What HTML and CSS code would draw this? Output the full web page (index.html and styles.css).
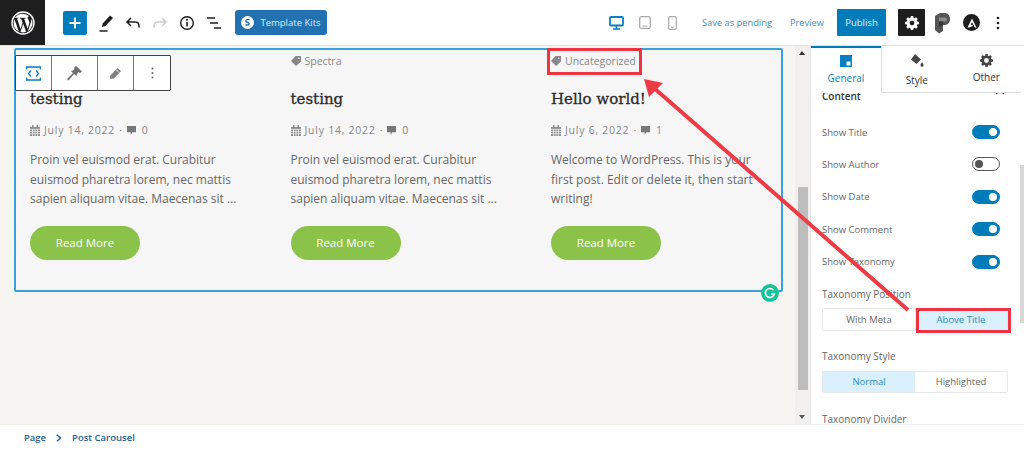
FILE: index.html
```html
<!DOCTYPE html>
<html lang="en">
<head>
<meta charset="utf-8">
<title>Post Carousel</title>
<link rel="stylesheet" href="styles.css">
</head>
<body>
<div class="app">
  <header class="topbar">
    <div class="wp-logo">
      <svg width="24" height="24" viewBox="0 0 24 24"><circle cx="12" cy="12" r="11" fill="none" stroke="#fff" stroke-width="1.4"/><path fill="#fff" d="M2.6 12a9.4 9.4 0 0 0 5.3 8.5L3.4 8.2A9.4 9.4 0 0 0 2.6 12zm15.7-.5c0-1.200-.4-2-.8-2.600-.5-.8-.9-1.400-.9-2.100 0-.8.600-1.600 1.500-1.600h.1A9.400 9.400 0 0 0 4 6.900h.6c1 0 2.500-.1 2.500-.1.500 0 .6.700.1.800 0 0-.5.100-1.100.1l3.400 10.200 2.100-6.200-1.500-4c-.5 0-1-.1-1-.1-.5 0-.4-.8.100-.8 0 0 1.600.1 2.500.1 1 0 2.500-.1 2.500-.1.500 0 .6.700.1.800 0 0-.5.100-1.100.1l3.400 10.100.9-3.100c.4-1.200.7-2.100.7-2.800zM12.200 12.800l-2.800 8.200a9.400 9.400 0 0 0 5.800-.2l-.1-.1zm8.100-5.300l.1 1c0 .9-.2 2-.7 3.400l-2.900 8.300a9.400 9.400 0 0 0 3.500-12.700z"/></svg>
    </div>
    <div class="tools">
      <button class="add-btn">
        <svg width="14" height="14" viewBox="0 0 14 14"><path d="M7 1.500v11M1.500 7h11" stroke="#fff" stroke-width="1.800"/></svg>
      </button>
      <span class="tool">
        <svg width="18" height="20" viewBox="0 0 18 20"><path fill="#1e1e1e" d="M13 2.500l3 2.500-7.500 8-3.500 1 .7-3.500z"/><path d="M2.500 18h8" stroke="#1e1e1e" stroke-width="1.500"/></svg>
      </span>
      <span class="tool">
        <svg width="18" height="18" viewBox="0 0 18 18"><path fill="none" stroke="#1e1e1e" stroke-width="1.500" d="M7 4L3 8l4 4M3 8h8c2.500 0 4 1.500 4 4v1.500"/></svg>
      </span>
      <span class="tool">
        <svg width="18" height="18" viewBox="0 0 18 18"><path fill="none" stroke="#ccc" stroke-width="1.500" d="M11 4l4 4-4 4M15 8H7c-2.500 0-4 1.500-4 4v1.500"/></svg>
      </span>
      <span class="tool">
        <svg width="16" height="16" viewBox="0 0 16 16"><circle cx="8" cy="8" r="6.300" fill="none" stroke="#1e1e1e" stroke-width="1.400"/><path d="M8 7v4.500" stroke="#1e1e1e" stroke-width="1.600"/><circle cx="8" cy="4.800" r="1" fill="#1e1e1e"/></svg>
      </span>
      <span class="tool">
        <svg width="16" height="14" viewBox="0 0 16 14"><path d="M1 2h8M4 7h8M8 12h7" stroke="#1e1e1e" stroke-width="1.500"/></svg>
      </span>
      <button class="kits-btn">
        <svg width="13" height="13" viewBox="0 0 13 13"><circle cx="6.500" cy="6.500" r="6.500" fill="#fff"/><path d="M8.500 3.600H6C4.500 3.600 4.400 5.800 6 6.200l1 .3c1.400.4 1.200 2.500-.3 2.500H4.400" fill="none" stroke="#2271b1" stroke-width="1.400"/></svg>
        Template Kits
      </button>
    </div>
    <div class="actions">
      <div class="devices">
        <svg width="15" height="14" viewBox="0 0 15 14"><rect x="1" y="1" width="13" height="8.500" rx="1" fill="none" stroke="#0a7fbd" stroke-width="1.800"/><path d="M7.500 10v2.500M4 13h7" stroke="#0a7fbd" stroke-width="1.500"/></svg>
        <svg width="12" height="13" viewBox="0 0 12 13"><rect x=".7" y=".7" width="10.600" height="11.600" rx="1.500" fill="none" stroke="#aaa" stroke-width="1.300"/><path d="M3.500 10h5" stroke="#aaa"/></svg>
        <svg class="device-phone" width="9" height="14" viewBox="0 0 9 14"><rect x=".7" y=".7" width="7.600" height="12.600" rx="1.300" fill="none" stroke="#aaa" stroke-width="1.200"/><path d="M3 11.300h3" stroke="#aaa"/></svg>
      </div>
      <a class="link save">Save as pending</a>
      <a class="link preview">Preview</a>
      <button class="publish">Publish</button>
      <button class="gear-btn">
        <svg width="14" height="14" viewBox="0 0 24 24"><path fill="#fff" fill-rule="evenodd" d="M14 1l.6 3.200 1.700.7L19 3.100 21.900 6l-1.800 2.700.7 1.700L24 11v4l-3.200.6-.7 1.700 1.800 2.700L19 22.900l-2.700-1.800-1.700.7L14 25h-4l-.6-3.200-1.700-.7L5 22.900 2.100 20l1.800-2.700-.7-1.700L0 15v-4l3.200-.6.700-1.700L2.100 6 5 3.100l2.700 1.800 1.700-.7L10 1zM12 9a4 4 0 1 0 0 8 4 4 0 0 0 0-8z" transform="translate(0 -1)"/></svg>
      </button>
      <svg class="p-logo" width="15" height="22" viewBox="0 0 15 22"><path fill="#555" d="M0 4l5-3h5c3 0 5 2.800 5 6s-2 6-5 6H8v6l-4 2.500L0 18z"/><path fill="#8a8a8a" d="M4 5.500h5.500C11 5.500 12 6.200 12 7.400S11 9.500 9.500 9.500H4z"/><path fill="#333" d="M4 9.500h4V13l-4 2z"/></svg>
      <span class="astra">
        <svg width="10" height="10" viewBox="0 0 10 10"><path fill="#fff" d="M5 .5L9.500 9.500H7.800L5 4 3.600 7l1.700-.3L6 8 2 9.500H.5z"/></svg>
      </span>
      <svg class="dots" width="4" height="14" viewBox="0 0 4 14"><circle cx="2" cy="2" r="1.300" fill="#1e1e1e"/><circle cx="2" cy="7" r="1.300" fill="#1e1e1e"/><circle cx="2" cy="12" r="1.300" fill="#1e1e1e"/></svg>
    </div>
  </header>

  <div class="workspace">
    <main class="canvas">
      <section class="block">
        <article class="post">
          <div class="tag tag-hidden">&nbsp;</div>
          <h2>testing</h2>
          <div class="meta"><svg class="ico" width="10" height="11" viewBox="0 0 10 11"><path fill="#8f8f8f" d="M0 2h10v9H0zM2 0h1.500v2H2zM6.500 0H8v2H6.500z"/><path stroke="#f6f6f6" stroke-width=".7" d="M0 4.300h10M0 6.500h10M0 8.700h10M2.500 4v7M5 4v7M7.500 4v7"/></svg><span>July 14, 2022</span><span class="sep">·</span><svg class="ico" width="9" height="9" viewBox="0 0 10 10"><path fill="#777" d="M0 0h10v7H6L4 10V7H0z"/></svg><span class="num">0</span></div>
          <p>Proin vel euismod erat. Curabitur euismod pharetra lorem, nec mattis sapien aliquam vitae. Maecenas sit ...</p>
          <a class="read">Read More</a>
        </article>
        <article class="post">
          <div class="tag"><svg class="ico" width="10" height="10" viewBox="0 0 10 10"><path fill="#888" d="M4.500 0H10v5.500L5 10 0 5z"/><circle cx="7.800" cy="2.200" r=".8" fill="#f6f6f6"/></svg>Spectra</div>
          <h2>testing</h2>
          <div class="meta"><svg class="ico" width="10" height="11" viewBox="0 0 10 11"><path fill="#8f8f8f" d="M0 2h10v9H0zM2 0h1.500v2H2zM6.500 0H8v2H6.500z"/><path stroke="#f6f6f6" stroke-width=".7" d="M0 4.300h10M0 6.500h10M0 8.700h10M2.500 4v7M5 4v7M7.500 4v7"/></svg><span>July 14, 2022</span><span class="sep">·</span><svg class="ico" width="9" height="9" viewBox="0 0 10 10"><path fill="#777" d="M0 0h10v7H6L4 10V7H0z"/></svg><span class="num">0</span></div>
          <p>Proin vel euismod erat. Curabitur euismod pharetra lorem, nec mattis sapien aliquam vitae. Maecenas sit ...</p>
          <a class="read">Read More</a>
        </article>
        <article class="post">
          <div class="tag"><svg class="ico" width="10" height="10" viewBox="0 0 10 10"><path fill="#888" d="M4.500 0H10v5.500L5 10 0 5z"/><circle cx="7.800" cy="2.200" r=".8" fill="#f6f6f6"/></svg>Uncategorized</div>
          <h2>Hello world!</h2>
          <div class="meta"><svg class="ico" width="10" height="11" viewBox="0 0 10 11"><path fill="#8f8f8f" d="M0 2h10v9H0zM2 0h1.500v2H2zM6.500 0H8v2H6.500z"/><path stroke="#f6f6f6" stroke-width=".7" d="M0 4.300h10M0 6.500h10M0 8.700h10M2.500 4v7M5 4v7M7.500 4v7"/></svg><span>July 6, 2022</span><span class="sep">·</span><svg class="ico" width="9" height="9" viewBox="0 0 10 10"><path fill="#777" d="M0 0h10v7H6L4 10V7H0z"/></svg><span class="num">1</span></div>
          <p>Welcome to WordPress. This is your first post. Edit or delete it, then start writing!</p>
          <a class="read">Read More</a>
        </article>
      </section>
      <div class="block-toolbar">
        <span class="tb tb-first">
          <svg width="15" height="15" viewBox="0 0 15 15"><path fill="none" stroke="#0a7fbd" stroke-width="1.300" d="M.7 3.500V1h13.600v2.500M.7 11.500V14h13.600v-2.500M5 4.500L2.500 7.500 5 10.500M10 4.500l2.500 3-2.500 3"/></svg>
        </span>
        <span class="tb tb-wide">
          <svg width="15" height="15" viewBox="0 0 15 15"><path fill="#6f6f6f" d="M9 0l6 5.500-2 1.500-1.500-1L10 8l-.5 2L7 8 1.500 14.500 0 13l6-6-2-2 2-.5 1.500-1.500L7 2z"/></svg>
        </span>
        <span class="tb">
          <svg width="11" height="11" viewBox="0 0 12 12"><path fill="#808080" d="M8.500 0L12 3.500 4 11.500.5 12 0 8.500z"/><path stroke="#fff" d="M7 2l3 3"/></svg>
        </span>
        <span class="tb tb-last">
          <svg width="3" height="12" viewBox="0 0 3 12"><circle cx="1.500" cy="1.500" r="1" fill="#666"/><circle cx="1.500" cy="6" r="1" fill="#666"/><circle cx="1.500" cy="10.500" r="1" fill="#666"/></svg>
        </span>
      </div>
      <span class="grammarly">
        <svg width="12" height="12" viewBox="0 0 12 12"><path fill="none" stroke="#fff" stroke-width="1.600" d="M9.500 3.200A4.500 4.500 0 1 0 10.300 7H7.200"/></svg>
      </span>
    </main>
    <div class="scroll-track"><i class="scroll-up"></i><div class="scroll-thumb"></div><i class="scroll-down"></i></div>
    <aside class="sidebar">
      <div class="tabs">
        <div class="tab tab-active">
          <svg width="12" height="12" viewBox="0 0 12 12"><path fill="#0a7fbd" fill-rule="evenodd" d="M0 0h12v12H0zM6.500 6.500V10.500H10.500V6.500z"/></svg>
          <span>General</span>
        </div>
        <div class="tab tab-style">
          <svg width="14" height="15" viewBox="0 0 14 15"><path fill="#444" d="M5 1l6 5.500-4.500 4.500L1 6.500z"/><path fill="#444" d="M12 9c.8 1.300 1.500 2.200 1.500 3.200a1.500 1.500 0 0 1-3 0c0-1 .7-1.900 1.500-3.200z"/></svg>
          <span>Style</span>
        </div>
        <div class="tab tab-other">
          <svg width="13" height="13" viewBox="0 0 24 24"><path fill="#444" fill-rule="evenodd" d="M14 0l.6 3.200 1.700.7L19 2.100 21.900 5l-1.800 2.700.7 1.700L24 10v4l-3.200.6-.7 1.700 1.800 2.700L19 21.900l-2.700-1.800-1.700.7L14 24h-4l-.6-3.200-1.700-.7L5 21.900 2.100 19l1.800-2.700-.7-1.700L0 14v-4l3.200-.6.700-1.700L2.100 5 5 2.100l2.700 1.800 1.700-.7L10 0zM12 7.500a4.500 4.500 0 1 0 0 9 4.500 4.500 0 0 0 0-9z"/></svg>
          <span>Other</span>
        </div>
      </div>
      <div class="panel">
        <div class="panel-head"><span>Content</span><svg width="10" height="6" viewBox="0 0 10 6"><path fill="none" stroke="#333" stroke-width="1.300" d="M1 5l4-4 4 4"/></svg></div>
        <div class="row"><span>Show Title</span><i class="toggle on"></i></div>
        <div class="row"><span>Show Author</span><i class="toggle"></i></div>
        <div class="row"><span>Show Date</span><i class="toggle on"></i></div>
        <div class="row"><span>Show Comment</span><i class="toggle on"></i></div>
        <div class="row"><span>Show Taxonomy</span><i class="toggle on"></i></div>
        <div class="field-label first">Taxonomy Position</div>
        <div class="seg"><span>With Meta</span><span class="sel">Above Title</span></div>
        <div class="field-label">Taxonomy Style</div>
        <div class="seg seg-style"><span class="sel">Normal</span><span>Highlighted</span></div>
        <div class="field-label last">Taxonomy Divider</div>
      </div>
      <div class="panel-scroll"><div class="panel-thumb"></div></div>
    </aside>
  </div>

  <footer class="crumbs"><span>Page</span><svg width="6" height="8" viewBox="0 0 6 8"><path fill="none" stroke="#1d5f95" stroke-width="1.500" d="M1 .8L4.500 4 1 7.200"/></svg><span>Post Carousel</span></footer>

  <svg class="overlay" width="1024" height="450" viewBox="0 0 1024 450">
    <rect x="548.500" y="49.500" width="92" height="24" fill="none" stroke="#ee3342" stroke-width="3"/>
    <rect x="917.500" y="309.500" width="92" height="22" fill="none" stroke="#ee3342" stroke-width="3"/>
    <path d="M908 310L654 88" stroke="#ee3b46" stroke-width="4" fill="none"/>
    <path fill="#ee3b46" d="M644 79L663 83 649 97z"/>
  </svg>
</div>
</body>
</html>
```
FILE: styles.css
```css
* { box-sizing: border-box; }
html, body { margin: 0; padding: 0; }
body { font-family: "Open Sans", sans-serif; background: #fff; overflow: hidden; }
.app { position: relative; width: 1024px; height: 450px; display: flex; flex-direction: column; overflow: hidden; }

.topbar { height: 46px; flex: none; display: flex; align-items: flex-start; background: #fff; border-bottom: 1px solid #e2e2e2; }
.wp-logo { width: 45px; height: 45px; background: #1e1e1e; display: flex; align-items: center; justify-content: center; }
.tools { display: flex; align-items: center; height: 45px; margin-left: 18px; }
.add-btn { width: 24px; height: 24px; padding: 0; border: 0; border-radius: 2px; background: #007cba; display: flex; align-items: center; justify-content: center; }
.tool { width: 27px; height: 24px; display: flex; align-items: center; justify-content: center; }
.add-btn + .tool { margin-left: 5px; }
.kits-btn { margin-left: 8px; width: 92px; height: 25px; padding: 0; border: 0; border-radius: 3px; background: #2271b1; color: #dfeaf4; font: 9.500px "Open Sans", sans-serif; display: flex; align-items: center; justify-content: center; gap: 6px; }
.actions { margin-left: auto; display: flex; align-items: center; height: 45px; padding-right: 24px; }
.devices { display: flex; align-items: center; gap: 15px; margin-right: 25px; }
.device-phone { margin-left: 2px; }
.link { color: #3a93c8; font-size: 9.300px; }
.preview { margin-left: 18px; }
.publish { margin-left: 13px; width: 49px; height: 27px; padding: 0; border: 0; border-radius: 1px; background: #007cba; color: #e8f3f9; font: 9.500px "Open Sans", sans-serif; }
.gear-btn { margin-left: 12px; width: 27px; height: 27px; padding: 0; border: 0; border-radius: 1px; background: #1e1e1e; display: flex; align-items: center; justify-content: center; }
.p-logo { margin-left: 10px; }
.astra { margin-left: 13px; width: 17px; height: 17px; border-radius: 50%; background: #1e1e1e; display: flex; align-items: center; justify-content: center; }
.dots { margin-left: 16px; }

.workspace { flex: 1; display: flex; min-height: 0; }
.canvas { position: relative; flex: 1; min-width: 0; background: #f6f5f2; padding: 2px 0 0 14px; overflow: hidden; }
.block { width: 769px; height: 244px; display: flex; background: #f6f6f6; border: 2px solid #3aa0da; border-radius: 2px; padding-left: 14px; }
.post { width: 260.500px; flex: none; padding-top: 4px; }
.tag { height: 14px; line-height: 14px; font-size: 10.500px; color: #888; display: flex; align-items: center; }
.tag .ico { margin-right: 4px; }
.post h2 { margin: 19px 0 0; height: 24px; font: 400 15px/24px "DejaVu Serif", serif; -webkit-text-stroke: .3px #2a2a2a; color: #2a2a2a; }
.meta { margin-top: 12px; height: 14px; line-height: 14px; font-size: 10.500px; letter-spacing: .75px; color: #888; display: flex; align-items: center; white-space: pre; }
.meta .ico:first-child { margin-right: 4px; }
.sep { margin: 0 4px; }
.num { margin-left: 6px; }
.post p { margin: 13px 0 0; width: 210px; font-size: 12px; line-height: 19.500px; color: #666; }
.read { display: flex; align-items: center; justify-content: center; margin-top: 17px; width: 110px; height: 34px; border-radius: 17px; background: #8bc34a; color: #fff; font-size: 11.500px; font-weight: 500; }
.block-toolbar { position: absolute; left: 15px; top: 9px; display: flex; height: 36px; background: #fff; border: 1px solid #444; border-radius: 1px; }
.tb { width: 36px; display: flex; align-items: center; justify-content: center; border-left: 1px solid #777; }
.tb-first { border-left: 0; width: 35px; }
.tb-wide { width: 46px; }
.tb-last { width: 37px; }
.grammarly { position: absolute; left: 761px; top: 238px; width: 18px; height: 18px; border-radius: 50%; background: #15c39a; display: flex; align-items: center; justify-content: center; }

.scroll-track { position: relative; width: 15px; flex: none; background: #f1f0ee; }
.scroll-up { position: absolute; left: 4px; top: 5px; border: 3px solid transparent; border-top: 0; border-bottom: 4px solid #333; }
.scroll-down { position: absolute; left: 4px; bottom: 5px; border: 3px solid transparent; border-bottom: 0; border-top: 4px solid #555; }
.scroll-thumb { position: absolute; left: 3px; top: 141px; width: 10px; height: 203px; background: #bdbdbd; }

.sidebar { position: relative; width: 214px; flex: none; background: #fff; border-left: 1px solid #e6e6e6; overflow: hidden; }
.tabs { position: absolute; left: 0; top: 0; z-index: 2; display: flex; height: 47px; width: 210px; background: #fff; }
.tab { display: flex; flex-direction: column; align-items: center; gap: 5px; font-size: 10px; color: #333; border-bottom: 1px solid #ddd; padding-top: 7px; flex: 1; }
.tab-active { flex: none; width: 70px; color: #0a7fbd; border-top: 2px solid #007cba; border-bottom: 0; padding-top: 7px; gap: 4px; }
.tab-other { gap: 3px; padding-top: 8px; }
.tab-style { border-left: 1px solid #ddd; }
.panel { padding: 42px 12px 0 11px; color: #666; font-size: 10px; width: 209px; }
.panel-head { display: flex; justify-content: space-between; align-items: center; height: 16px; font-size: 10px; font-weight: 600; color: #333; }
.panel-head svg { margin: 0 3px 8px 0; }
.row { display: flex; justify-content: space-between; align-items: center; height: 16px; margin-top: 16.400px; font-size: 9.500px; }
.panel-head + .row { margin-top: 20px; }
.toggle { position: relative; display: block; width: 28px; height: 14px; margin-right: 8px; border-radius: 7px; border: 1px solid #555; background: #fff; }
.toggle::after { content: ""; position: absolute; left: 2px; top: 2px; width: 8px; height: 8px; border-radius: 50%; background: #555; }
.toggle.on { background: #007cba; border-color: #007cba; }
.toggle.on::after { left: auto; right: 2px; background: #fff; }
.field-label { height: 14px; line-height: 14px; margin-top: 18px; }
.field-label.first { margin-top: 17px; }
.field-label.last { height: 10px; line-height: 10px; margin-top: 21px; }
.seg { display: flex; margin-top: 7px; height: 23px; border: 1px solid #e8e8e8; border-radius: 2px; font-size: 9.500px; }
.seg-style { margin-top: 8px; height: 22px; }
.seg span { flex: 1; display: flex; align-items: center; justify-content: center; }
.seg .sel { background: #dbf0fd; color: #2a8cc4; }
.panel-scroll { position: absolute; right: 0; top: 119px; width: 4px; height: 158px; }
.panel-thumb { width: 100%; height: 100%; background: #d8d8d8; }

.crumbs { flex: none; height: 26px; background: #fff; display: flex; align-items: center; gap: 10px; padding-left: 24px; font-size: 9.500px; font-weight: 600; color: #1d5f95; border-top: 1px solid #f0f0f0; position: relative; z-index: 3; }

.overlay { position: absolute; left: 0; top: 0; z-index: 5; pointer-events: none; }
```
